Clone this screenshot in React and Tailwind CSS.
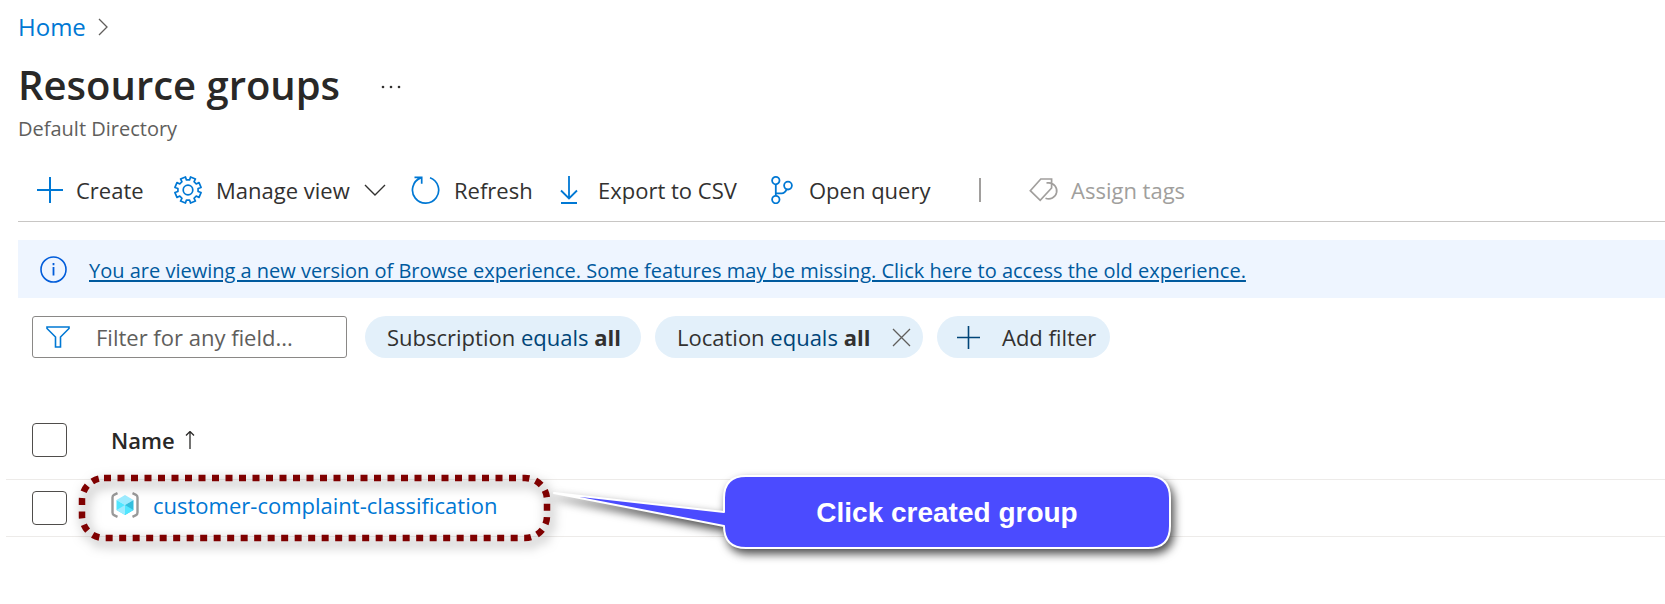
const gearPoints = (() => {
  const teeth = 8;
  const pts = [];
  for (let i = 0; i < teeth; i++) {
    const a = (i * 2 * Math.PI) / teeth + Math.PI / teeth;
    [[-0.24, 10.2], [-0.2, 13.3], [0.2, 13.3], [0.24, 10.2]].forEach(([d, r]) => {
      pts.push(`${(14 + r * Math.sin(a + d)).toFixed(2)},${(14 - r * Math.cos(a + d)).toFixed(2)}`);
    });
  }
  return pts.join(" ");
})();

function Svg({ w, h, className = "", children, stroke = 1.6 }) {
  return (
    <svg
      width={w}
      height={h}
      viewBox={`0 0 ${w} ${h}`}
      fill="none"
      stroke="currentColor"
      strokeWidth={stroke}
      className={`shrink-0 ${className}`}
      aria-hidden="true"
    >
      {children}
    </svg>
  );
}

const blue = "text-[#0078d4]";

const PlusIcon = ({ className }) => (
  <Svg w={28} h={28} className={className} stroke={2}>
    <path d="M14 1v26M1 14h26" />
  </Svg>
);

const GearIcon = () => (
  <Svg w={28} h={28} className={blue} stroke={1.7}>
    <polygon points={gearPoints} strokeLinejoin="round" />
    <circle cx="14" cy="14" r="4.8" />
  </Svg>
);

const RefreshIcon = () => (
  <Svg w={29} h={28} className={blue} stroke={1.7}>
    <path d="M19 1.7A13.1 13.1 0 1 1 9.6 1.9M3.5 1.4h7.2v6.4" />
  </Svg>
);

const DownloadIcon = () => (
  <Svg w={18} h={28} className={blue} stroke={1.8}>
    <path d="M9 0v22M1 14.5l8 8 8-8M1 27h16" />
  </Svg>
);

const BranchIcon = () => (
  <Svg w={22} h={28} className={blue} stroke={1.8}>
    <circle cx="4.8" cy="4.6" r="3.7" />
    <circle cx="4.8" cy="23.6" r="3.7" />
    <circle cx="17" cy="9.6" r="3.9" />
    <path d="M4.8 8.3v11.6M4.8 17.3h6c2.5 0 3.5-1 4.8-3.9" />
  </Svg>
);

const TagIcon = () => (
  <Svg w={30} h={24} className="text-[#a19f9d]" stroke={1.7}>
    <path d="M1.3 12.7L11.8 1h10.8v9L11.2 22.3zM17.5 4.900h2.500a8 8 0 1 1-3.500 15.300" />
  </Svg>
);

function Command({ icon, label, className = "", disabled = false, children }) {
  return (
    <button type="button" disabled={disabled} className={`flex items-center whitespace-nowrap ${className}`}>
      {icon}
      <span>{label}</span>
      {children}
    </button>
  );
}

function ResourceGroupIcon() {
  return (
    <svg width="28" height="26" viewBox="0 0 28 26" className="shrink-0" aria-hidden="true">
      <path d="M6.5 1.2L3 2.8Q1.5 3.5 1.5 5.5v15q0 2 1.5 2.7l3.5 1.6M21.5 1.2L25 2.8q1.5.7 1.5 2.7v15q0 2-1.5 2.7l-3.5 1.6" fill="none" stroke="#999" strokeWidth="2.4" />
      <path d="M14 3l8.5 4.9L14 13 5.5 7.9z" fill="#9cebff" />
      <path d="M5.5 7.9L14 13v10l-8.500-4.900z" fill="#50e6ff" />
      <path d="M22.5 7.9L14 13v10l8.500-4.900z" fill="#32bedd" />
      <path d="M5.5 18.1L14 13v10z" fill="#9cebff" />
      <path d="M14 13l8.5 5.1L14 23z" fill="#50e6ff" />
    </svg>
  );
}

function Highlight() {
  return (
    <svg
      width="520"
      height="110"
      viewBox="0 0 520 110"
      className="pointer-events-none absolute -left-[49px] -top-[22px] z-10 max-w-none overflow-visible"
      style={{ filter: "drop-shadow(3px 5px 6px rgba(0,0,0,.5))" }}
      aria-hidden="true"
    >
      <rect x="20" y="20" width="465" height="60" rx="22" fill="none" stroke="#7f0000" strokeWidth="6.5" strokeDasharray="7 6.5" />
    </svg>
  );
}

function Callout() {
  return (
    <div className="pointer-events-none absolute -top-[7px] left-[440px] z-20 h-20 w-[622px]">
      <svg
        width="622"
        height="80"
        viewBox="0 0 622 80"
        className="absolute inset-0 overflow-visible"
        style={{ filter: "drop-shadow(3px 5px 5px rgba(0,0,0,.7))" }}
        aria-hidden="true"
      >
        <path
          d="M3 20L173 39V25Q173 3 195 3H597Q619 3 619 25V53Q619 75 597 75H195Q173 75 173 53Z"
          fill="#4b4bff"
          stroke="#fff"
          strokeWidth="2"
          strokeLinejoin="round"
        />
      </svg>
      <div className="relative ml-[173px] flex h-20 w-[446px] items-center justify-center font-['Liberation_Sans',Arial,sans-serif] text-[28px] font-bold text-white">
        Click created group
      </div>
    </div>
  );
}

const checkbox =
  "block h-[34px] w-[35px] appearance-none rounded-[4px] border border-[#4f4d4b] bg-white checked:bg-[#0078d4]";
const pill = "flex h-[42px] items-center whitespace-nowrap rounded-full bg-[#e3f0fa]";

export default function App() {
  return (
    <div className="min-h-screen overflow-hidden bg-white font-['Open_Sans','Segoe_UI',sans-serif] text-[22px] leading-[30px] text-[#323130]">
      <header className="pl-[18px] pt-3">
        <nav aria-label="Breadcrumb" className="flex items-center gap-3 text-2xl leading-[30px]">
          <a href="#home" className={blue}>Home</a>
          <Svg w={10} h={18} className="text-[#605e5c]" stroke={1.3}>
            <path d="M1 1l8 8-8 8" />
          </Svg>
        </nav>
        <div className="mt-4 flex items-center gap-10">
          <h1 className="text-[40px] font-semibold leading-[54px] text-[#292827]">Resource groups</h1>
          <button type="button" aria-label="More actions" className="pt-1 text-[#323130]">
            <svg width="22" height="4" viewBox="0 0 22 4" fill="currentColor" aria-hidden="true">
              <circle cx="3" cy="2" r="1.3" />
              <circle cx="11" cy="2" r="1.3" />
              <circle cx="19" cy="2" r="1.3" />
            </svg>
          </button>
        </div>
        <p className="mt-0.5 text-xl leading-[30px] text-[#605e5c]">Default Directory</p>
      </header>

      <div className="ml-[18px] mt-3.5 flex h-16 items-center border-b border-[#c8c6c4] pl-[18px]">
        <Command icon={<PlusIcon className={blue} />} label="Create" className="w-[138px] gap-3" />
        <Command icon={<GearIcon />} label="Manage view" className="w-[237px] gap-3.5">
          <Svg w={22} h={12} stroke={1.4}>
            <path d="M1 1l10 10L21 1" />
          </Svg>
        </Command>
        <Command icon={<RefreshIcon />} label="Refresh" className="w-[149px] gap-3.5" />
        <Command icon={<DownloadIcon />} label="Export to CSV" className="w-[211px] gap-5" />
        <Command icon={<BranchIcon />} label="Open query" className="w-[208px] gap-4" />
        <div className="mr-12 h-6 w-0.5 bg-[#a19f9d]" />
        <Command icon={<TagIcon />} label="Assign tags" disabled className="gap-3 text-[#a19f9d]" />
      </div>

      <div className="ml-[18px] mt-[18px] flex h-[58px] items-center gap-[22px] bg-[#eef5ff] pl-[22px]">
        <Svg w={27} h={27} className="text-[#015cda]" stroke={1.6}>
          <circle cx="13.5" cy="13.5" r="12.5" />
          <path d="M13.5 11v8.5M13.5 7v2.2" strokeWidth="1.8" />
        </Svg>
        <a href="#classic" className="whitespace-nowrap pt-1 text-xl text-[#005a9e] underline decoration-2 underline-offset-2">
          You are viewing a new version of Browse experience. Some features may be missing. Click here to access the old experience.
        </a>
      </div>

      <div className="ml-8 mt-[18px] flex items-center">
        <label className="mr-[18px] flex h-[42px] w-[315px] items-center gap-[26px] rounded-[3px] border border-[#8a8886] px-[13px]">
          <Svg w={24} h={22} className={blue} stroke={1.6}>
            <path d="M1 1h22v1.5L14.5 11v10h-5V11L1 2.5z" />
          </Svg>
          <input
            type="text"
            aria-label="Filter for any field"
            placeholder="Filter for any field..."
            className="w-full min-w-0 bg-transparent outline-none placeholder:text-[#605e5c]"
          />
        </label>
        <button type="button" className={`${pill} mr-3.5 w-[276px] pl-[22px]`}>
          <span>Subscription <span className="text-[#004578]">equals</span> <b>all</b></span>
        </button>
        <div className={`${pill} mr-3.5 w-[268px] justify-between pl-[22px] pr-3`}>
          <button type="button">Location <span className="text-[#004578]">equals</span> <b>all</b></button>
          <button type="button" aria-label="Remove location filter" className="text-[#605e5c]">
            <Svg w={19} h={19} stroke={1.3}>
              <path d="M1 1l17 17M18 1L1 18" />
            </Svg>
          </button>
        </div>
        <button type="button" className={`${pill} w-[173px] gap-[22px] pl-5`}>
          <Svg w={23} h={23} className="text-[#004578]" stroke={1.6}>
            <path d="M11.5 0v23M0 11.5h23" />
          </Svg>
          Add filter
        </button>
      </div>

      <div className="ml-1.5 mt-11">
        <table className="w-full border-collapse text-left">
          <thead>
            <tr className="h-[77px] border-b border-[#edebe9]">
              <th className="w-[105px] pl-[26px]">
                <input type="checkbox" aria-label="Select all" className={checkbox} />
              </th>
              <th className="font-semibold text-[#292827]" aria-sort="ascending">
                <span className="flex items-center gap-2.5">
                  Name
                  <Svg w={10} h={18} stroke={1.3}>
                    <path d="M5 0v18M1 4.5l4-4 4 4" />
                  </Svg>
                </span>
              </th>
            </tr>
          </thead>
          <tbody>
            <tr className="h-[57px] border-b border-[#edebe9]">
              <td className="pl-[26px]">
                <input type="checkbox" aria-label="Select customer-complaint-classification" className={checkbox} />
              </td>
              <td>
                <div className="relative flex h-14 items-center gap-[14px] pb-1.5">
                  <ResourceGroupIcon />
                  <a href="#customer-complaint-classification" className={blue}>customer-complaint-classification</a>
                  <Highlight />
                  <Callout />
                </div>
              </td>
            </tr>
          </tbody>
        </table>
      </div>
    </div>
  );
}
